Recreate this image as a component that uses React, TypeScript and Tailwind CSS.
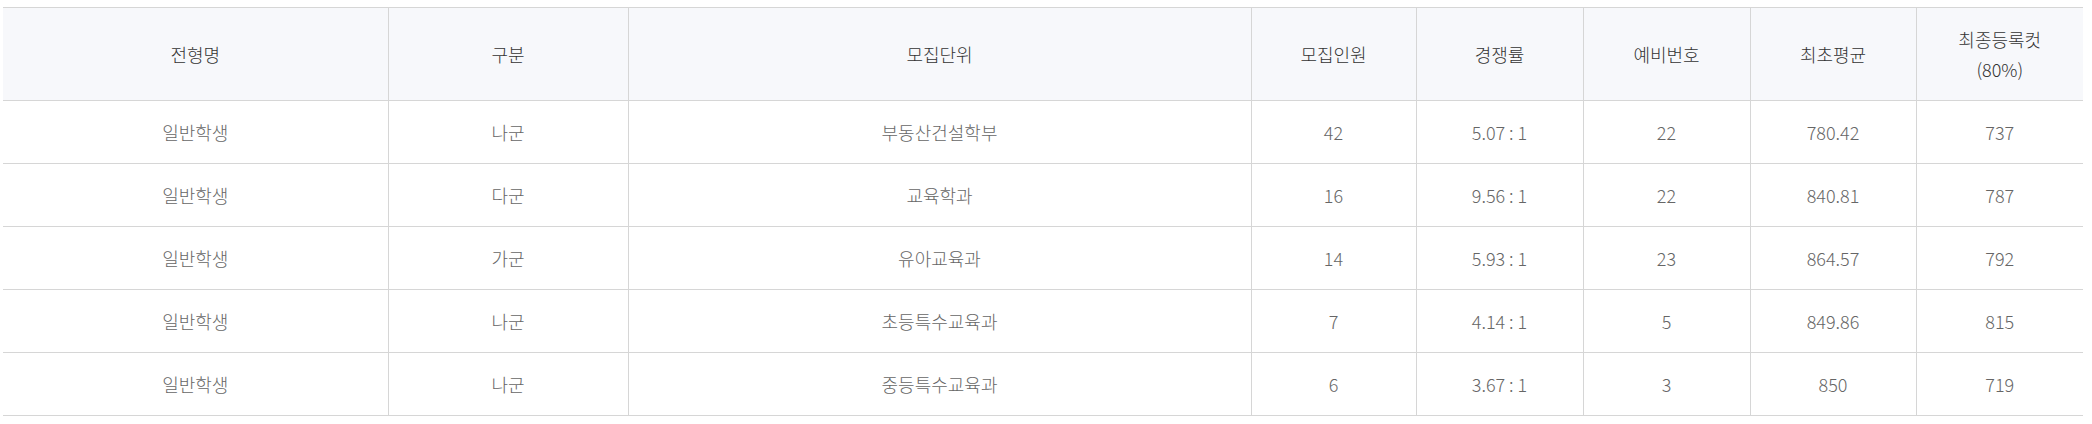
import React from "react";

const rows = [
  ["일반학생", "나군", "부동산건설학부", "42", "5.07 : 1", "22", "780.42", "737"],
  ["일반학생", "다군", "교육학과", "16", "9.56 : 1", "22", "840.81", "787"],
  ["일반학생", "가군", "유아교육과", "14", "5.93 : 1", "23", "864.57", "792"],
  ["일반학생", "나군", "초등특수교육과", "7", "4.14 : 1", "5", "849.86", "815"],
  ["일반학생", "나군", "중등특수교육과", "6", "3.67 : 1", "3", "850", "719"],
];

const widths = ["w-[385px]", "w-[240px]", "w-[623px]", "w-[165px]", "w-[167px]", "w-[167px]", "w-[166px]", "w-[167px]"];

export default function App() {
  return (
    <div className="bg-white w-[2092px] h-[424px] pt-[7px] pl-[3px]" style={{ fontFamily: '"Noto Sans CJK KR", "Noto Sans", sans-serif' }}>
      <table className="w-[2080px] table-fixed border-collapse border-t border-[#d6d6d6] text-[18px] font-light">
        <colgroup>
          {widths.map((w, i) => (
            <col key={i} className={w} />
          ))}
        </colgroup>
        <thead>
          <tr className="h-[93px] bg-[#f7f8fb]">
            {["전형명", "구분", "모집단위", "모집인원", "경쟁률", "예비번호", "최초평균"].map((h, i) => (
              <th
                key={i}
                className={`font-light text-[#333333] text-center align-middle border-b border-[#d6d6d6] ${i > 0 ? "border-l" : ""}`}
              >
                {h}
              </th>
            ))}
            <th className="font-light text-[#333333] text-center align-middle border-b border-l border-[#d6d6d6] leading-[30px]">
              최종등록컷
              <br />
              (80%)
            </th>
          </tr>
        </thead>
        <tbody>
          {rows.map((r, ri) => (
            <tr key={ri} className="h-[63px]">
              {r.map((c, ci) => (
                <td
                  key={ci}
                  className={`text-center align-middle text-[#666666] border-b border-[#d6d6d6] ${ci > 0 ? "border-l" : ""}`}
                >
                  {c}
                </td>
              ))}
            </tr>
          ))}
        </tbody>
      </table>
    </div>
  );
}
